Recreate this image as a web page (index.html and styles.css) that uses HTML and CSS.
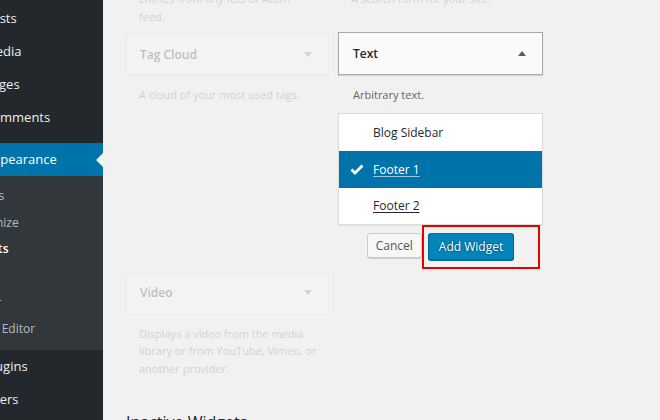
FILE: index.html
```html
<!DOCTYPE html>
<html lang="en">
<head>
    <meta charset="UTF-8">
    <title>Widgets</title>
    <link rel="stylesheet" href="styles.css">
</head>
<body>
<div class="page">
    <nav class="adminmenu">
        <ul class="menu">
            <li><a href="#">Posts</a></li>
            <li><a href="#">Media</a></li>
            <li><a href="#">Pages</a></li>
            <li><a href="#">Comments</a></li>
            <li class="separator"></li>
            <li class="current">
                <a href="#">Appearance</a>
                <ul class="submenu">
                    <li><a href="#">Themes</a></li>
                    <li><a href="#">Customize</a></li>
                    <li class="current"><a href="#">Widgets</a></li>
                    <li><a href="#">Menus</a></li>
                    <li><a href="#">Header</a></li>
                    <li><a href="#">Theme Editor</a></li>
                </ul>
            </li>
            <li><a href="#">Plugins</a></li>
            <li><a href="#">Users</a></li>
        </ul>
    </nav>

    <main class="content">
        <div class="widget-grid">
            <div class="widget dimmed">
                <div class="widget-top"><h3 class="widget-title">RSS</h3><span class="arrow-down"></span></div>
                <p class="widget-desc">Entries from any RSS or Atom<br>feed.</p>
            </div>
            <div class="widget dimmed">
                <div class="widget-top"><h3 class="widget-title">Search</h3><span class="arrow-down"></span></div>
                <p class="widget-desc">A search form for your site.</p>
            </div>

            <div class="widget dimmed">
                <div class="widget-top"><h3 class="widget-title">Tag Cloud</h3><span class="arrow-down"></span></div>
                <p class="widget-desc">A cloud of your most used tags.</p>
            </div>
            <div class="widget active">
                <div class="widget-top"><h3 class="widget-title">Text</h3><span class="arrow-up"></span></div>
                <p class="widget-desc">Arbitrary text.</p>
                <ul class="chooser">
                    <li><span>Blog Sidebar</span></li>
                    <li class="selected">
                        <svg class="check" width="14" height="11" viewBox="0 0 14 11"><polyline points="1.5,5.5 5,9 12.5,1.5" fill="none" stroke="#fff" stroke-width="2.8"/></svg>
                        <span class="link">Footer 1</span>
                    </li>
                    <li><span class="link">Footer 2</span></li>
                </ul>
                <div class="widget-actions">
                    <button class="button">Cancel</button>
                    <button class="button button-primary">Add Widget</button>
                    <div class="highlight"></div>
                </div>
            </div>

            <div class="widget dimmed">
                <div class="widget-top"><h3 class="widget-title">Video</h3><span class="arrow-down"></span></div>
                <p class="widget-desc">Displays a video from the media<br>library or from YouTube, Vimeo, or<br>another provider.</p>
            </div>
        </div>
        <h2 class="inactive-title">Inactive Widgets</h2>
    </main>
</div>
</body>
</html>
```

FILE: styles.css
```css
body { margin: 0; font-family: "Open Sans", "Noto Sans", sans-serif; background: #f1f1f1; color: #444; height: 420px; overflow: hidden; }
.page { display: flex; height: 420px; overflow: hidden; }

.adminmenu { width: 103px; flex: none; background: #23282d; overflow: hidden; }
.adminmenu ul { list-style: none; margin: 0; padding: 0; }
.menu { padding-top: 2px !important; margin-left: -16px !important; }
.menu > li > a { display: block; position: relative; height: 33px; line-height: 33px; font-size: 13px; color: #eee; text-decoration: none; white-space: nowrap; }
.menu .separator { height: 9px; }
.menu > .current > a { background: #0073aa; color: #fff; }
.menu > .current > a::after {
    content: "";
    position: absolute;
    right: 0;
    top: 50%;
    margin-top: -7px;
    border-style: solid;
    border-width: 7px 7px 7px 0;
    border-color: transparent #f1f1f1 transparent transparent;
}
.submenu { background: #32373c; padding: 7px 0 !important; margin-left: -24px !important; }
.submenu a { display: block; height: 26.67px; line-height: 26.67px; font-size: 12px; color: rgba(240, 245, 250, .7); text-decoration: none; white-space: nowrap; }
.submenu .current a { color: #fff; font-weight: 600; letter-spacing: .4px; }

/* widgets area */
.content { flex: 1; padding-left: 23px; }
.widget-grid { display: grid; grid-template-columns: 203px 205px; column-gap: 9px; align-items: start; margin-top: -63px; }
.widget.dimmed { opacity: .25; }
.widget-top {
    display: flex;
    justify-content: space-between;
    align-items: center;
    height: 40px;
    padding: 0 16px 0 13px;
    background: #fafafa;
    border: 1px solid #e5e5e5;
}
.widget-title { margin: 0; font-size: 12px; font-weight: 600; color: #23282d; }
.arrow-down { border-style: solid; border-width: 5px 4px 0 4px; border-color: #72777c transparent transparent transparent; }
.arrow-up { border-style: solid; border-width: 0 4px 5px 4px; border-color: transparent transparent #555d66 transparent; }
.widget-desc { margin: 0; padding: 11px 6px 8px 13px; font-size: 11px; line-height: 17.5px; color: #72777c; }

.widget.active .widget-top { height: 41px; margin-top: -1px; border-color: #a7aaad; box-shadow: 0 1px 1px rgba(0, 0, 0, .12); padding-left: 14px; }
.widget.active .widget-desc { padding-left: 15px; padding-bottom: 9px; color: #666; }

.chooser { list-style: none; margin: 0; padding: 0; background: #fff; border: 1px solid #ddd; box-shadow: 0 1px 1px rgba(0, 0, 0, .05); }
.chooser li { display: flex; align-items: center; height: 36px; padding-left: 34px; font-size: 12px; color: #23282d; }
.chooser li:nth-child(-n+2) { height: 37px; }
.chooser .link { text-decoration: underline; text-underline-offset: 2px; }
.chooser .selected { background: #0073aa; color: #fff; }
.chooser .selected .link { text-decoration-color: #9cc8df; }
.check { margin-left: -23px; margin-right: 9px; }

.widget-actions { position: relative; display: flex; justify-content: center; align-items: flex-start; gap: 6px; padding: 8px 0 12px; }
.button {
    font-family: inherit;
    font-size: 12px;
    height: 25px;
    padding: 0 8px;
    border: 1px solid #ccc;
    border-radius: 3px;
    background: #f7f7f7;
    color: #555;
    box-shadow: 0 1px 0 #ccc;
    cursor: pointer;
}
.button-primary {
    height: 27px;
    padding: 0 10px;
    background: #0085ba;
    border-color: #0073aa #006799 #006799;
    color: #fff;
    box-shadow: 0 1px 0 #006799;
    text-shadow: 0 -1px 1px #006799, 1px 0 1px #006799, 0 1px 1px #006799, -1px 0 1px #006799;
}
.highlight { position: absolute; left: 84px; top: 0; width: 114px; height: 40px; border: 2px solid #e60000; }

.inactive-title { margin: 26px 0 0; font-size: 16px; font-weight: 400; line-height: 22px; color: #23282d; }
```
